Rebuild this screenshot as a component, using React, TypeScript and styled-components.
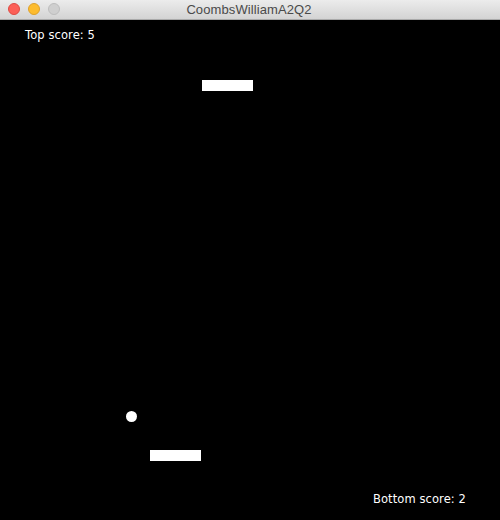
import React from "react";
import styled, { createGlobalStyle } from "styled-components";

const Global = createGlobalStyle`
  html, body { margin: 0; padding: 0; background: #000; }
  body { width: 500px; height: 520px; overflow: hidden; }
`;

const Window = styled.div`
  width: 500px;
  height: 520px;
  display: flex;
  flex-direction: column;
  background: #000;
`;

const TitleBar = styled.div`
  height: 19px;
  flex: none;
  position: relative;
  display: flex;
  align-items: center;
  justify-content: center;
  background: linear-gradient(#ececec, #d3d3d3);
  border-bottom: 1px solid #a9a9a9;
`;

const Lights = styled.div`
  position: absolute;
  left: 8px;
  top: 3px;
  display: flex;
  gap: 8px;
`;

const Light = styled.span<{ $fill: string; $edge: string }>`
  width: 12px;
  height: 12px;
  box-sizing: border-box;
  border-radius: 50%;
  background: ${(p) => p.$fill};
  border: 1px solid ${(p) => p.$edge};
`;

const Title = styled.div`
  font-family: "Liberation Sans", "DejaVu Sans", sans-serif;
  font-size: 13px;
  color: #4a4a4a;
  letter-spacing: 0.1px;
  margin-left: -2px;
`;

const Court = styled.div`
  flex: 1;
  position: relative;
  display: flex;
  flex-direction: column;
  justify-content: space-between;
  padding: 8px 34px 14px 25px;
`;

const Score = styled.div<{ $align: "start" | "end" }>`
  font-family: "DejaVu Sans", sans-serif;
  font-size: 11.5px;
  color: #fff;
  align-self: flex-${(p) => p.$align};
  letter-spacing: 0.1px;
`;

const Paddle = styled.div`
  position: absolute;
  width: 51px;
  height: 11px;
  background: #fff;
`;

const Ball = styled.div`
  position: absolute;
  width: 11px;
  height: 11px;
  border-radius: 50%;
  background: #fff;
`;

const objects = {
  top: { x: 202, y: 60 },
  bottom: { x: 150, y: 430 },
  ball: { x: 126, y: 391 },
};

export default function App() {
  return (
    <>
      <Global />
      <Window>
        <TitleBar>
          <Lights>
            <Light $fill="#fc5f57" $edge="#de4a43" />
            <Light $fill="#fdbc2e" $edge="#dea12a" />
            <Light $fill="#cfcfcf" $edge="#bdbdbd" />
          </Lights>
          <Title>CoombsWilliamA2Q2</Title>
        </TitleBar>
        <Court>
          <Score $align="start">Top score: 5</Score>
          <Paddle style={{ left: objects.top.x, top: objects.top.y }} />
          <Ball style={{ left: objects.ball.x, top: objects.ball.y }} />
          <Paddle style={{ left: objects.bottom.x, top: objects.bottom.y }} />
          <Score $align="end">Bottom score: 2</Score>
        </Court>
      </Window>
    </>
  );
}
